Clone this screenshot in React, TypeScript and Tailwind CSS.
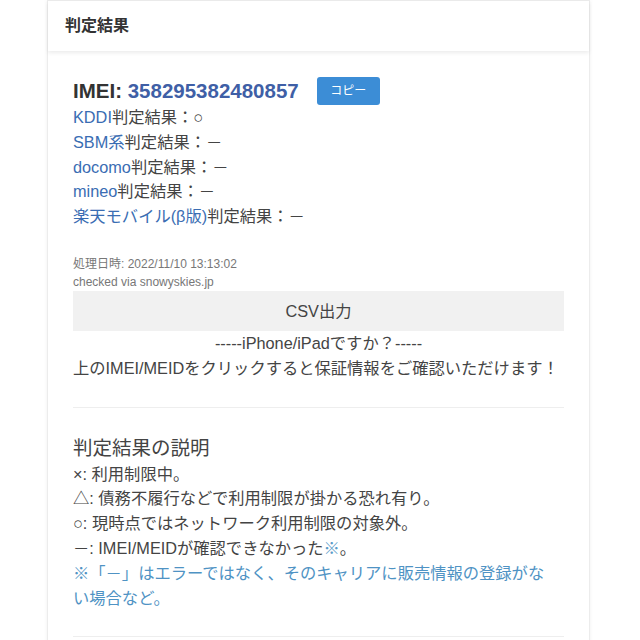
import React from 'react';

const carriers = [
  { name: 'KDDI', result: '○' },
  { name: 'SBM系', result: '－' },
  { name: 'docomo', result: '－' },
  { name: 'mineo', result: '－' },
  { name: '楽天モバイル(β版)', result: '－' },
];

export default function App() {
  return (
    <div className="min-h-[640px] w-full bg-white font-['Liberation_Sans','Noto_Sans_CJK_JP',sans-serif] text-[#333]">
      <div className="ml-[47px] w-[543px] border border-[#ececec] bg-white shadow-[0_0_4px_rgba(0,0,0,0.06)]">
        {/* Header */}
        <div className="flex h-[50px] items-center px-[17px] shadow-[0_2px_4px_rgba(0,0,0,0.08)]">
          <h2 className="text-[16px] font-bold text-[#333]">判定結果</h2>
        </div>

        {/* Body */}
        <div className="px-[25px] pt-[26px] pb-[26px]">
          <div className="flex h-[28px] items-center">
            <span className="text-[20.5px] font-bold leading-none text-[#333]">
              IMEI: <span className="text-[#3f5fa6]">358295382480857</span>
            </span>
            <button className="ml-[18px] h-[28px] w-[63px] rounded-[3px] bg-[#3c8dd6] text-[12px] text-white">
              コピー
            </button>
          </div>

          <div className="text-[16.3px] leading-[24.8px]">
            {carriers.map((c) => (
              <div key={c.name}>
                <span className="text-[#3a6db3]">{c.name}</span>
                <span className="text-[#444]">判定結果：{c.result}</span>
              </div>
            ))}
          </div>

          <div className="mt-[26px] text-[12px] leading-[18px] text-[#777]">
            <div>処理日時: 2022/11/10 13:13:02</div>
            <div>checked via snowyskies.jp</div>
          </div>

          <div className="flex h-[40px] items-center justify-center bg-[#f1f1f1] text-[16.3px] text-[#444]">
            CSV出力
          </div>

          <div className="text-[16.3px] leading-[24.8px] text-[#444]">
            <div className="text-center">-----iPhone/iPadですか？-----</div>
            <div>上のIMEI/MEIDをクリックすると保証情報をご確認いただけます！</div>
          </div>

          <hr className="my-[26px] border-t border-[#eeeeee]" />

          <h3 className="text-[19.5px] leading-[28px] text-[#444]">判定結果の説明</h3>
          <div className="text-[16.3px] leading-[24.8px] text-[#444]">
            <div>×: 利用制限中。</div>
            <div>△: 債務不履行などで利用制限が掛かる恐れ有り。</div>
            <div>○: 現時点ではネットワーク利用制限の対象外。</div>
            <div>
              －: IMEI/MEIDが確認できなかった<span className="text-[#5b9bc8]">※</span>。
            </div>
            <div className="text-[#4f93c4]">
              ※「－」はエラーではなく、そのキャリアに販売情報の登録がな
              <br />
              い場合など。
            </div>
          </div>

          <hr className="mt-[26px] border-t border-[#eeeeee]" />
        </div>
      </div>
    </div>
  );
}
